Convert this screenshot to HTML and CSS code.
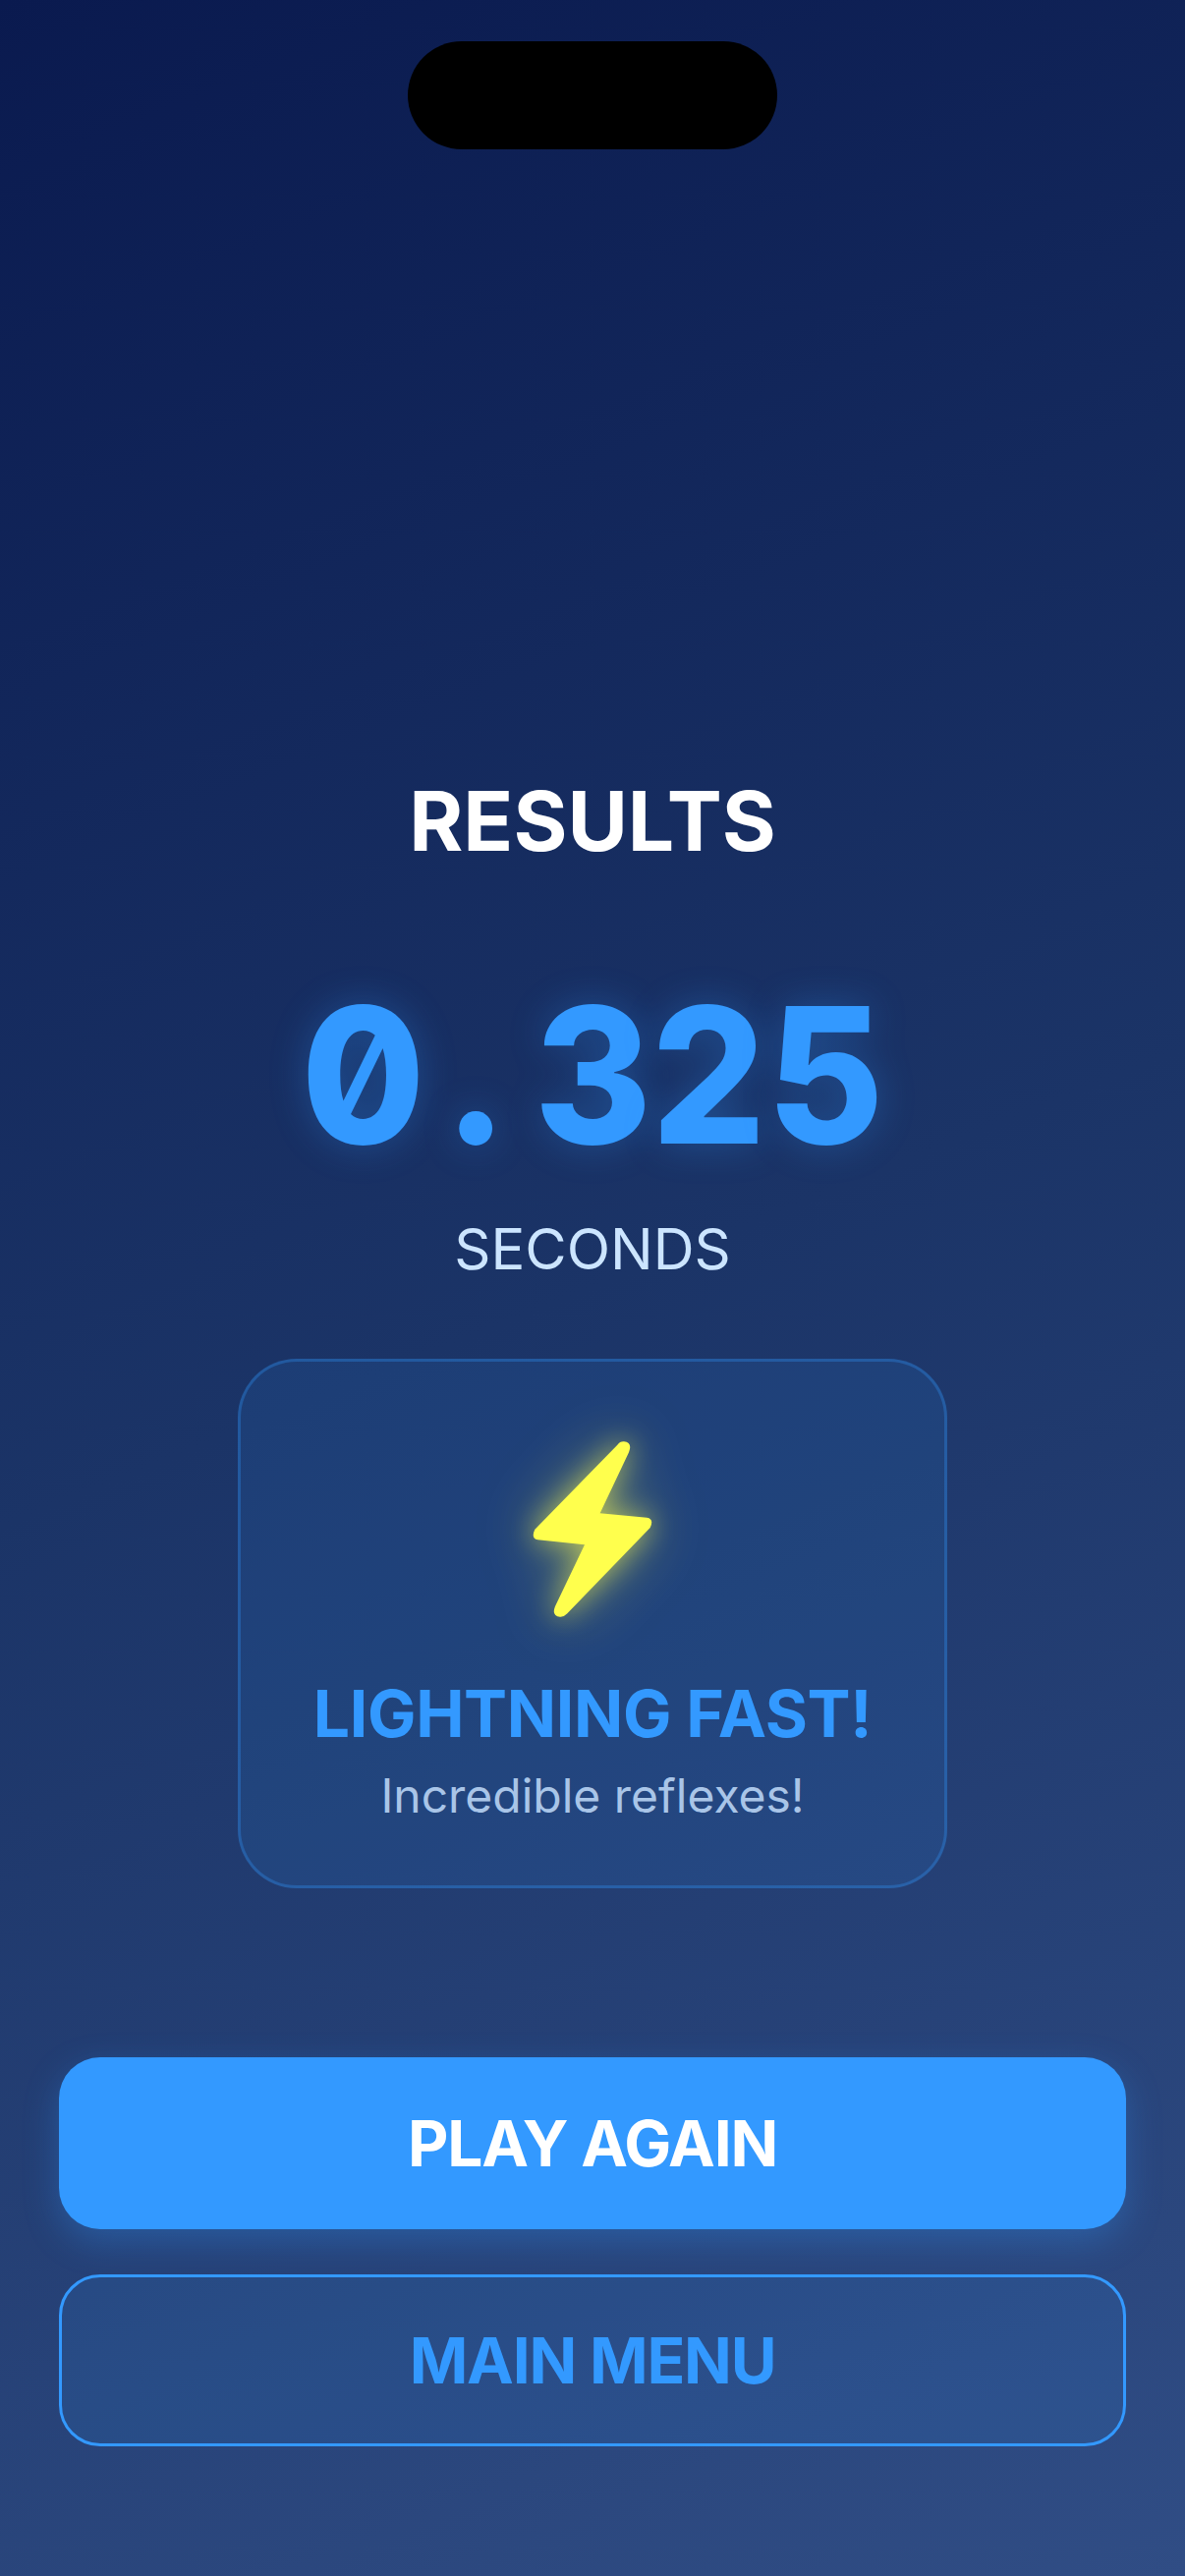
FILE: index.html
```html
<!DOCTYPE html>
<html lang="en">
<head>
<meta charset="utf-8">
<title>Results</title>
<link rel="stylesheet" href="styles.css">
</head>
<body>
<main class="screen">
  <div class="island"></div>
  <h1 class="title">RESULTS</h1>
  <div class="time"><span class="ch">0</span><span class="ch">.</span><span class="ch">3</span><span class="ch">2</span><span class="ch">5</span></div>
  <div class="unit">SECONDS</div>
  <section class="card">
    <svg class="bolt" viewBox="9 0 600 660" aria-hidden="true">
      <path d="M332 301 L420 115 Q432 85 405 82 Q393 81 385 92 L133 350 Q120 378 142 382 L285 397 L195 585 Q183 615 210 617 Q222 618 232 607 L485 345 Q498 318 475 314 Z"/>
    </svg>
    <h2 class="rating">LIGHTNING FAST!</h2>
    <p class="praise">Incredible reflexes!</p>
  </section>
  <div class="actions">
    <button class="btn btn-primary">PLAY AGAIN</button>
    <button class="btn btn-secondary">MAIN MENU</button>
  </div>
</main>
</body>
</html>
```
FILE: styles.css
```css
* { box-sizing: border-box; }
html, body { margin: 0; padding: 0; }
body { width: 1206px; height: 2622px; overflow: hidden; font-family: Inter, "Liberation Sans", sans-serif; }
.screen {
  position: relative;
  height: 2622px;
  padding: 786px 60px 132px;
  display: flex;
  flex-direction: column;
  align-items: center;
  background: linear-gradient(158deg, #0a1a4f 0%, #1b3467 50%, #304d85 100%);
}
.island {
  position: absolute;
  top: 42px;
  left: 415px;
  width: 376px;
  height: 110px;
  border-radius: 55px;
  background: #000;
}
.title { margin: 0; font-size: 84px; line-height: 100px; font-weight: 700; color: #fff; }
.time {
  margin-top: 108px;
  display: flex;
  justify-content: center;
  transform: scaleX(0.95);
  font-size: 192px;
  line-height: 200px;
  font-weight: 800;
  font-feature-settings: "zero";
  color: #3399ff;
  text-shadow: 0 0 40px rgba(51, 153, 255, 0.3);
}
.ch { width: 124.7px; text-align: center; }
.unit { margin-top: 42px; font-size: 58px; line-height: 70px; font-weight: 400; color: #cce5ff; }
.card {
  margin-top: 77px;
  width: 722px;
  height: 539px;
  padding-top: 54px;
  display: flex;
  flex-direction: column;
  align-items: center;
  border: 3px solid rgba(51, 153, 255, 0.3);
  border-radius: 60px;
  background: rgba(51, 153, 255, 0.1);
}
.bolt {
  width: 200px;
  height: 220px;
  flex: none;
  filter: drop-shadow(0 0 14px rgba(255, 255, 77, 0.55)) drop-shadow(0 0 30px rgba(255, 255, 77, 0.35));
}
.bolt path { fill: #ffff4d; }
.rating { margin: 44px 0 0; font-size: 66px; line-height: 80px; font-weight: 700; letter-spacing: -0.35px; color: #3399ff; }
.praise { margin: 14px 0 0; font-size: 48px; line-height: 60px; color: #a9c5e8; }
.actions { margin-top: auto; width: 100%; display: flex; flex-direction: column; gap: 46px; }
.btn {
  height: 175px;
  width: 100%;
  padding: 0;
  border-radius: 42px;
  font-family: inherit;
  font-size: 64px;
  letter-spacing: -1.2px;
  font-weight: 700;
}
.btn-primary { border: 0; background: #3399ff; color: #fff; box-shadow: 0 12px 36px rgba(51, 153, 255, 0.3); }
.btn-secondary { border: 3px solid #3399ff; background: rgba(51, 153, 255, 0.1); color: #3399ff; }
```
